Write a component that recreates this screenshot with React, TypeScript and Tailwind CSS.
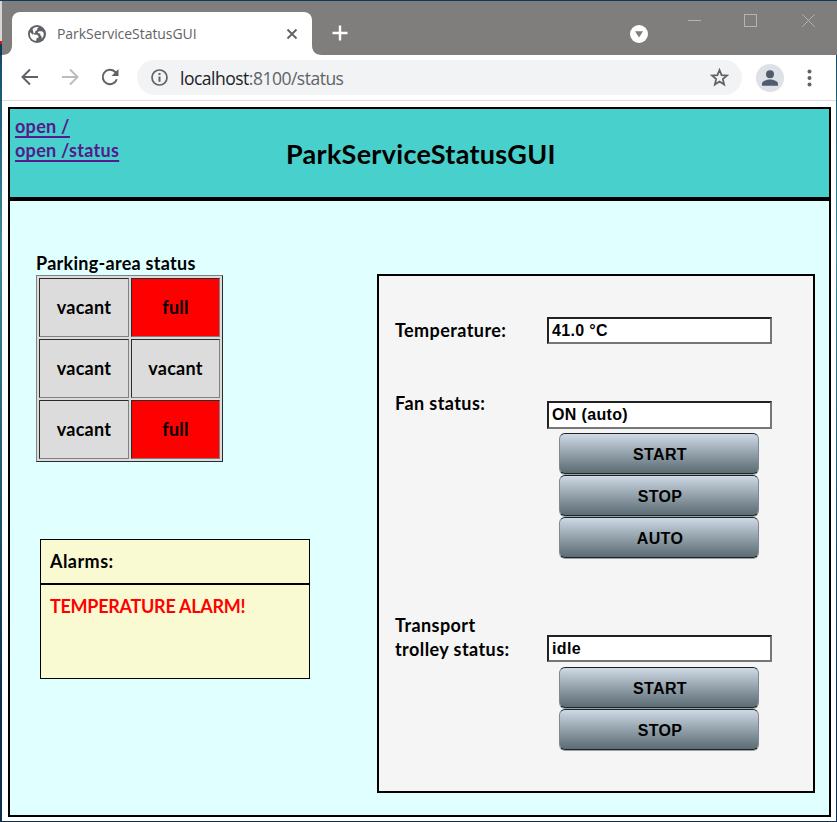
import React from "react";

const calibri = "font-['Lato','Liberation_Sans',sans-serif] font-bold tracking-[0.28px]";
const arial = "font-['Liberation_Sans',Arial,sans-serif] font-bold tracking-[0.35px]";

function TabStrip() {
  return (
    <div className="flex h-[54px] bg-[#807e7c] pl-[2px] pr-[1px]">
      <Flare side="left" />
      <div className="mt-[11px] flex h-[43px] w-[300px] shrink-0 items-center rounded-t-[8px] bg-white pl-[16px] pr-[14px]">
        <svg width="18" height="18" viewBox="0 0 18 18" className="shrink-0">
          <circle cx="9" cy="9" r="9" fill="#5f6368" />
          <path
            d="M10.600 2.100 9.200 3.800v1.100L7.400 6.100l-.3 1.700-1.500.4-.4 1.400 3.700.1 1.600 1.200-.2 1.800-1.800.6-.2 2.500c-3.600-.1-6.400-3-6.400-6.600 0-.7.1-1.300.3-1.900l2.400 2.300h1.500L4.500 4.300C5.600 2.800 7.200 2 9 2c.6 0 1.100 0 1.600.1Z"
            fill="#fff"
          />
          <path d="M11.300 6.200h2.700l1.600 1.500c.5 2.500-.4 4.700-2.100 6l.1-2.300-1.400-1.300.1-1.500-2.100-.4-.4-1.200Z" fill="#fff" />
        </svg>
        <span className="ml-[11px] whitespace-nowrap font-['Open_Sans','Noto_Sans',sans-serif] text-[14px] leading-[20px] tracking-[-0.05px] text-[#5f6368]">
          ParkServiceStatusGUI
        </span>
        <svg width="12" height="12" viewBox="0 0 12 12" className="ml-auto shrink-0">
          <path d="M1.500 1.500l9 9M10.500 1.500l-9 9" stroke="#5f6368" strokeWidth="1.900" />
        </svg>
      </div>
      <Flare side="right" />
      <svg width="16" height="16" viewBox="0 0 16 16" className="ml-[10px] mt-[24px] shrink-0">
        <path d="M8 .5v15M.5 8h15" stroke="#fff" strokeWidth="2.400" />
      </svg>
      <svg width="18" height="18" viewBox="0 0 18 18" className="ml-auto mt-[24px] shrink-0">
        <circle cx="9" cy="9" r="9" fill="#fff" />
        <path d="M5 6.200h8L9 12.500Z" fill="#807e7c" />
      </svg>
      <svg width="13" height="14" viewBox="0 0 13 14" className="ml-[40px] mt-[12px] shrink-0">
        <path d="M0 7.500h13" stroke="#b5b4b3" />
      </svg>
      <svg width="13" height="13" viewBox="0 0 13 13" className="ml-[43px] mt-[13px] shrink-0">
        <rect x=".5" y=".5" width="12" height="12" fill="none" stroke="#b5b4b3" />
      </svg>
      <svg width="13" height="13" viewBox="0 0 13 13" className="ml-[45px] mr-[21px] mt-[13px] shrink-0">
        <path d="M.3.3l12.400 12.400M12.700.3.3 12.700" stroke="#b5b4b3" />
      </svg>
    </div>
  );
}

function Flare({ side }: { side: "left" | "right" }) {
  return (
    <svg width="10" height="10" viewBox="0 0 10 10" className="shrink-0 self-end">
      <path d={side === "left" ? "M0 10C7 10 10 6 10 0v10Z" : "M0 0c0 6 3 10 10 10H0Z"} fill="#fff" />
    </svg>
  );
}

function Toolbar() {
  return (
    <div className="flex h-[46px] items-center border-b border-[#dadce0] bg-white pl-[19px] pr-[19px]">
      <svg width="18" height="18" viewBox="0 0 18 18" className="-mt-[1px] shrink-0">
        <path d="M17 9H2M9 1.500 1.500 9 9 16.500" fill="none" stroke="#5f6368" strokeWidth="2" />
      </svg>
      <svg width="18" height="18" viewBox="0 0 18 18" className="-mt-[1px] ml-[22px] shrink-0">
        <path d="M1 9h15M9 1.500 16.500 9 9 16.500" fill="none" stroke="#babcbe" strokeWidth="2" />
      </svg>
      <svg width="18" height="18" viewBox="0 0 18 18" className="-mt-[1px] ml-[22px] mr-[1px] shrink-0">
        <path d="M15.800 11.200A7.200 7.200 0 1 1 14 3.800l2 2" fill="none" stroke="#5f6368" strokeWidth="2" />
        <path d="M17.500 1v7h-7Z" fill="#5f6368" />
      </svg>
      <div className="ml-[17px] flex h-[35px] w-[605px] shrink-0 items-center rounded-full bg-[#f1f3f4] pl-[14px] pr-[13px]">
        <svg width="17" height="17" viewBox="0 0 17 17" className="shrink-0">
          <circle cx="8.500" cy="8.500" r="7.500" fill="none" stroke="#5f6368" strokeWidth="1.700" />
          <path d="M8.500 4v2M8.500 7.500v5.200" stroke="#5f6368" strokeWidth="2" />
        </svg>
        <span className="ml-[12px] whitespace-nowrap font-['Open_Sans','Noto_Sans',sans-serif] text-[17.500px] leading-[24px] tracking-[-0.5px] text-[#5f6368]">
          <span className="text-[#202124]">localhost</span>:8100/status
        </span>
        <svg width="19" height="19" viewBox="0 0 24 24" className="ml-auto shrink-0">
          <path
            d="m12 2.500 2.600 6.500 7 .5-5.400 4.500 1.700 6.900L12 17.200l-5.900 3.700L7.800 14 2.400 9.500l7-.5Z"
            fill="none"
            stroke="#5f6368"
            strokeWidth="2.200"
          />
        </svg>
      </div>
      <svg width="28" height="28" viewBox="0 0 28 28" className="ml-[14px] shrink-0">
        <circle cx="14" cy="14" r="14" fill="#dee1e6" />
        <circle cx="14" cy="10.200" r="4" fill="#505b6e" />
        <path d="M6 21.700V20c0-3 4.500-4.500 8-4.500s8 1.500 8 4.500v1.700Z" fill="#505b6e" />
      </svg>
      <svg width="5" height="18" viewBox="0 0 5 18" className="ml-auto mr-[5px] shrink-0">
        <circle cx="2.500" cy="2.500" r="2" fill="#5f6368" />
        <circle cx="2.500" cy="9" r="2" fill="#5f6368" />
        <circle cx="2.500" cy="15.500" r="2" fill="#5f6368" />
      </svg>
    </div>
  );
}

function Slot({ full }: { full?: boolean }) {
  return (
    <div
      className={`flex items-center justify-center border border-b-[#808080] border-l-[#2c2c2c] border-r-[#808080] border-t-[#2c2c2c] pb-[1px] text-black ${full ? "bg-[#ff0000]" : "bg-[#dcdcdc]"}`}
    >
      {full ? "full" : "vacant"}
    </div>
  );
}

function Field({ value, tall }: { value: string; tall?: boolean }) {
  return (
    <div
      className={`${arial} ${tall ? "h-[28px] leading-[24px]" : "h-[27px] leading-[23px]"} w-[225px] border-2 border-b-[#767676] border-l-[#222] border-r-[#767676] border-t-[#222] bg-white pl-[3px] text-[16px] text-black`}
    >
      {value}
    </div>
  );
}

function ActionButton({ label }: { label: string }) {
  return (
    <button
      className={`${arial} ml-[12px] flex h-[41px] w-[200px] items-center justify-center rounded-[6px] border border-b-[#1c272c] border-l-[#7d8990] border-r-[#7d8990] border-t-[#1c2226] bg-linear-to-b from-[#cedae6] to-[#5c6c73] pl-[2px] pt-[3px] text-[16px] text-black shadow-[0_1px_0_#9aa0a3]`}
    >
      {label}
    </button>
  );
}

function Page() {
  return (
    <div className="flex grow flex-col bg-white pb-[4px] pl-[6px] pr-[5px] pt-[6px]">
      <div className={`${calibri} flex grow flex-col border-2 border-black bg-[#e0ffff] text-[18px] leading-[24px] text-black`}>
        <header className="flex h-[92px] shrink-0 border-b-4 border-black bg-[#48d1cc]">
          <nav className="flex w-[276px] flex-col items-start pl-[5px] pt-[5px] text-[#551a8b] underline decoration-2 underline-offset-[3px]">
            <a>open /</a>
            <a>open /status</a>
          </nav>
          <h1 className="whitespace-nowrap pt-[27px] text-[27px] leading-[36px]">ParkServiceStatusGUI</h1>
        </header>
        <main className="flex grow">
          <section className="w-[367px] shrink-0 pl-[26px] pt-[50px]">
            <h2>Parking-area status</h2>
            <div className="grid h-[187px] w-[187px] grid-cols-[90px_89px] grid-rows-[59px_59px_59px] gap-[2px] border border-b-[#2c2c2c] border-l-[#808080] border-r-[#2c2c2c] border-t-[#808080] bg-[#dcdcdc] p-[2px]">
              <Slot />
              <Slot full />
              <Slot />
              <Slot />
              <Slot />
              <Slot full />
            </div>
            <div className="ml-[4px] mt-[77px] h-[140px] w-[270px] border border-black bg-[#fafad2]">
              <div className="h-[45px] border-b-2 border-black pl-[9px] pt-[9px] tracking-[0.45px]">Alarms:</div>
              <div className="pl-[9px] pt-[9px] tracking-[-0.28px] text-[#ff0000]">TEMPERATURE ALARM!</div>
            </div>
          </section>
          <section className="mt-[73px] h-[519px] w-[438px] border-2 border-black bg-[#f5f5f5] pl-[16px] pt-[41px] tracking-[0.42px]">
            <div className="flex h-[84px]">
              <div className="w-[152px] shrink-0 pt-[1px]">Temperature:</div>
              <Field value="41.0 °C" />
            </div>
            <div className="flex h-[234px]">
              <div className="-mt-[10px] w-[152px] shrink-0">Fan status:</div>
              <div className="flex flex-col gap-[1px]">
                <div className="mb-[3px]">
                  <Field value="ON (auto)" tall />
                </div>
                <ActionButton label="START" />
                <ActionButton label="STOP" />
                <ActionButton label="AUTO" />
              </div>
            </div>
            <div className="flex">
              <div className="-mt-[22px] w-[152px] shrink-0">
                Transport
                <br />
                trolley status:
              </div>
              <div className="flex flex-col gap-[1px]">
                <div className="mb-[4px]">
                  <Field value="idle" />
                </div>
                <ActionButton label="START" />
                <ActionButton label="STOP" />
              </div>
            </div>
          </section>
        </main>
      </div>
    </div>
  );
}

export default function App() {
  return (
    <div className="flex h-[822px] w-[837px] flex-col overflow-hidden bg-linear-to-b from-[#0c3c5a] via-[#3a8c9c] via-30% to-[#0c2f50] to-85% pb-[1px] pl-[2px] pr-[1px] pt-[1px]">
      <div className="-ml-[2px] -mr-[1px] flex shrink-0">
        <div className="flex w-[2px] shrink-0 flex-col">
          <div className="h-[40px] bg-[#d8d6d4]" />
          <div className="h-[3px] bg-[#e01010]" />
          <div className="grow bg-[#0c3c5a]" />
        </div>
        <div className="-ml-[2px] grow pl-[2px]">
          <div className="-ml-[2px] [clip-path:inset(0_0_0_2px)]">
            <TabStrip />
          </div>
        </div>
      </div>
      <Toolbar />
      <Page />
    </div>
  );
}
